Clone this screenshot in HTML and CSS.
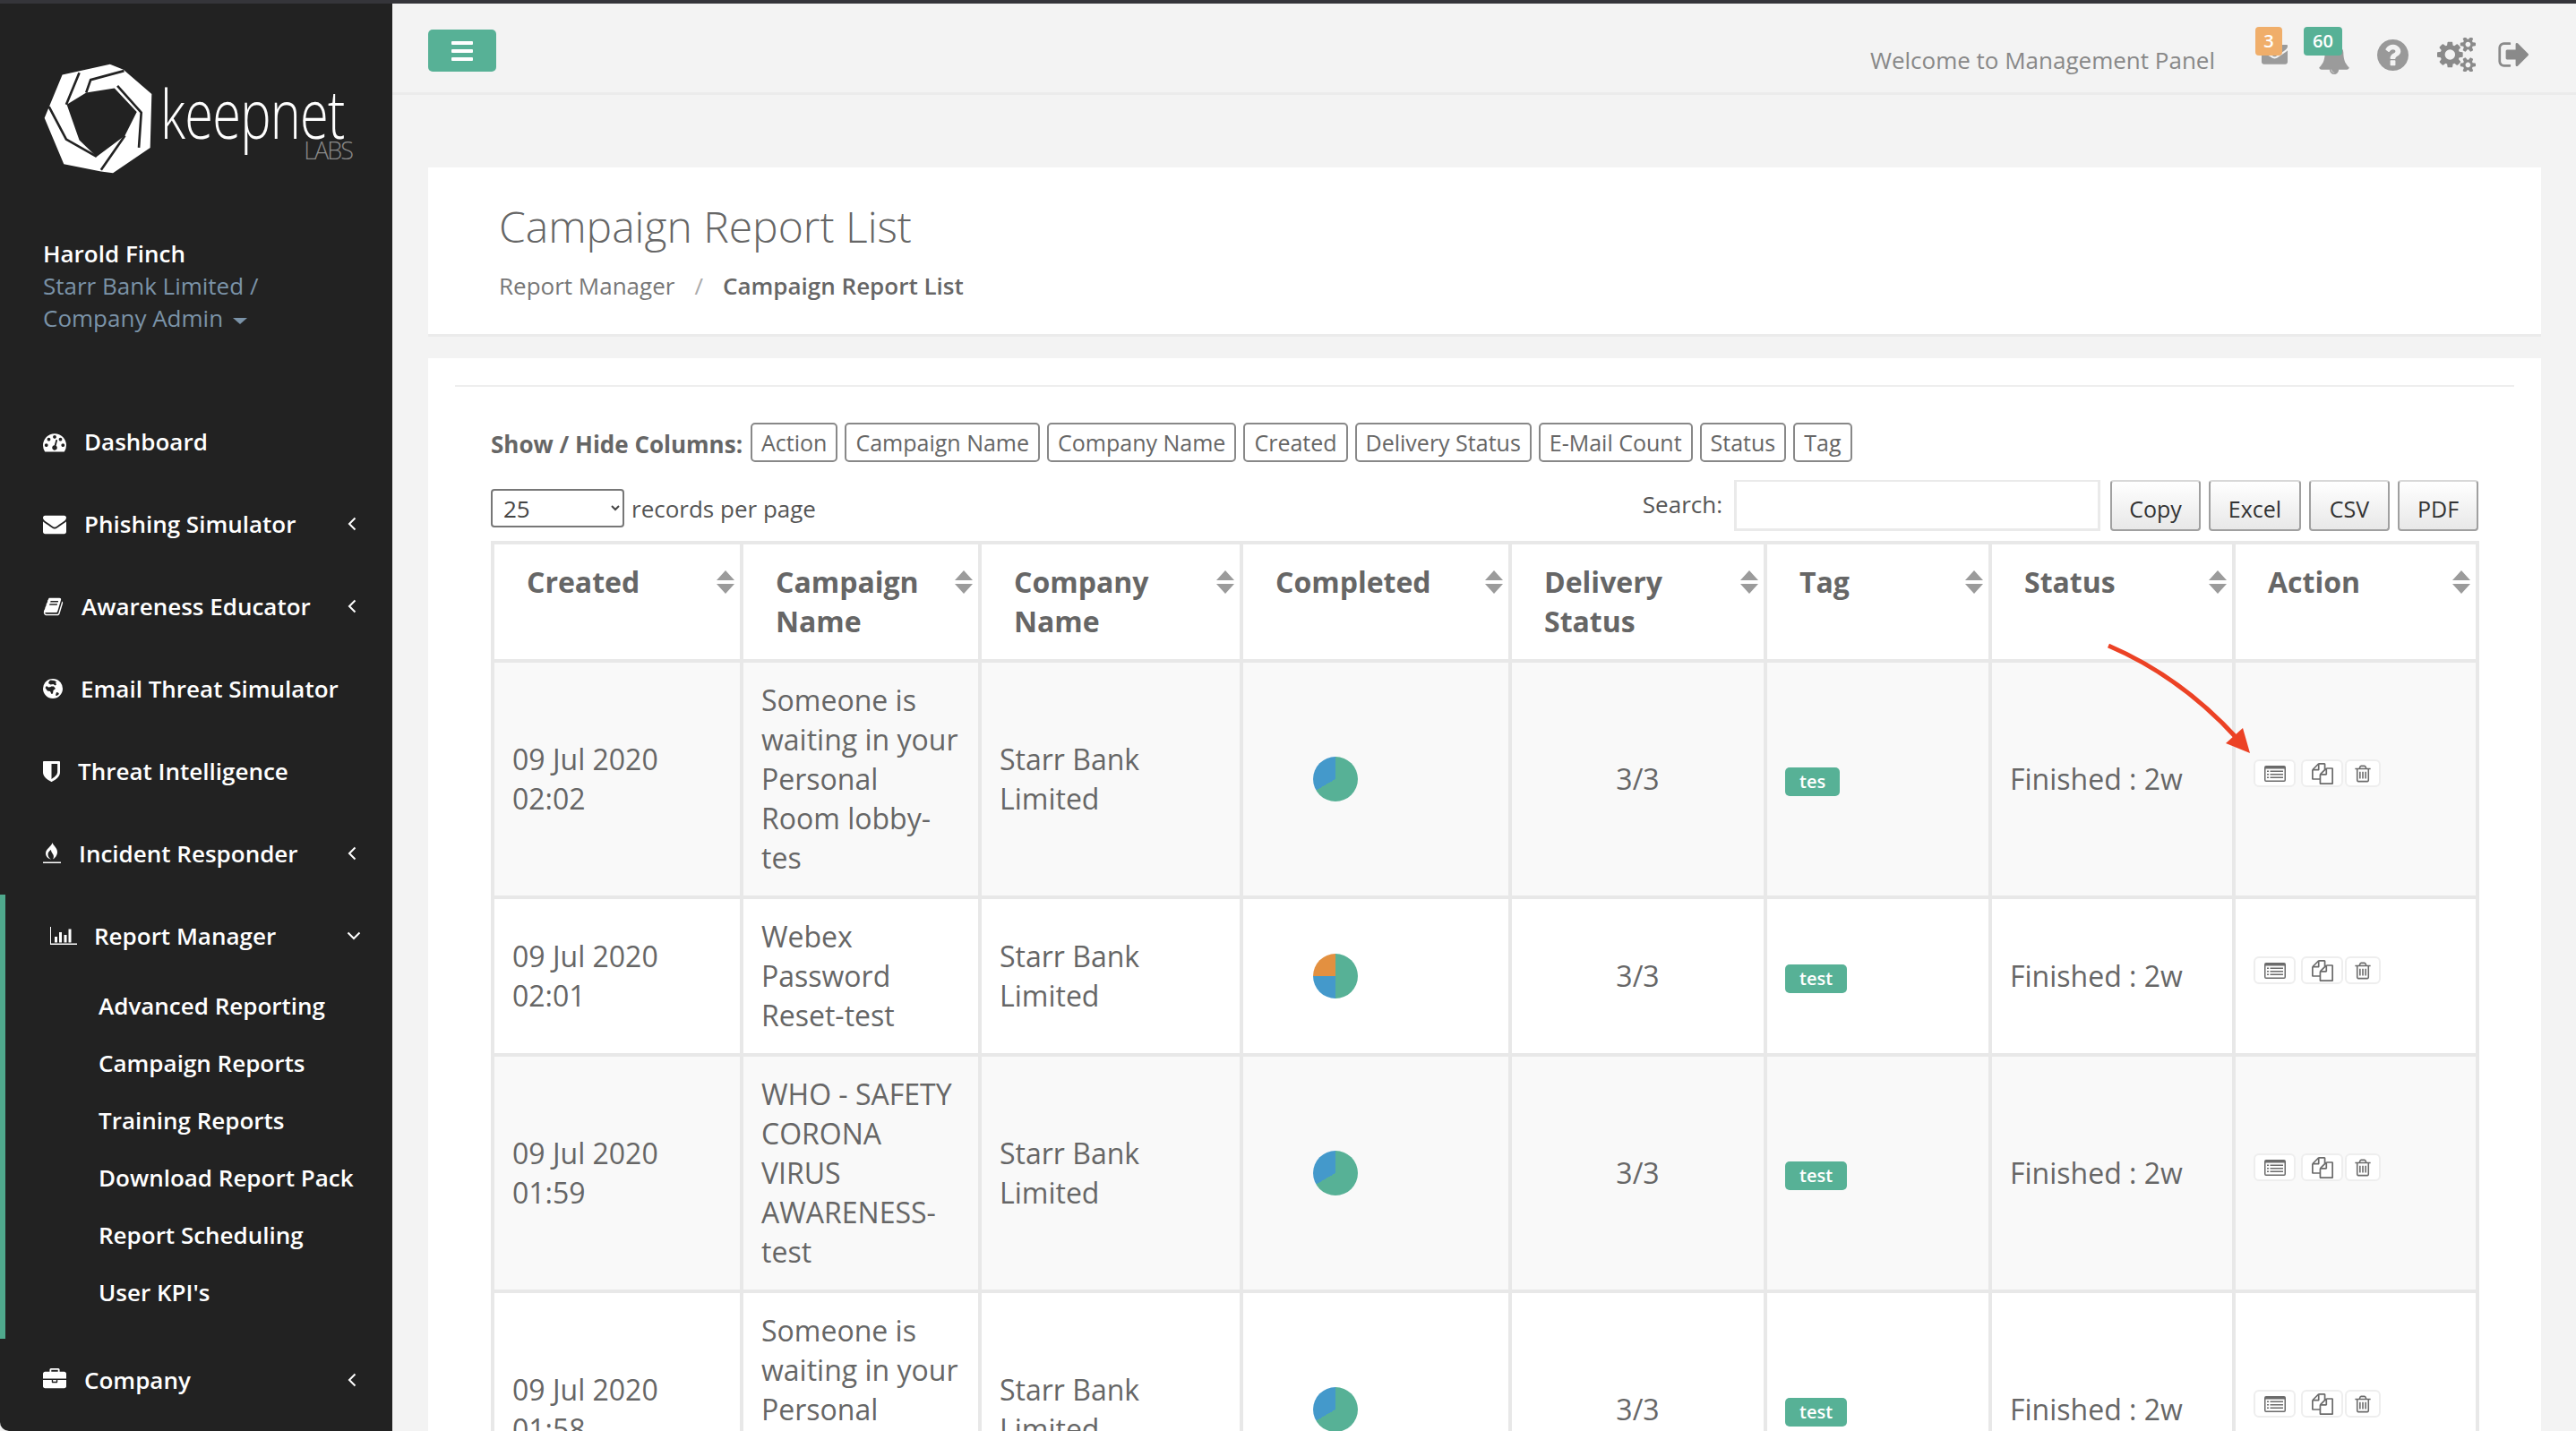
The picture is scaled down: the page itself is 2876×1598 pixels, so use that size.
FILE: index.html
```html
<!DOCTYPE html>
<html lang="en">
<head>
<meta charset="utf-8">
<title>Campaign Report List</title>
<link rel="stylesheet" href="styles.css">
</head>
<body>
<svg class="defs" xmlns="http://www.w3.org/2000/svg">
  <symbol id="i-env" viewBox="0 0 1792 1792"><path d="M1792 710v794q0 66-47 113t-113 47h-1472q-66 0-113-47t-47-113v-794q44 49 101 87 362 246 497 345 57 42 92.5 65.5t94.5 48 110 24.5h2q51 0 110-24.5t94.5-48 92.5-65.5q170-123 498-345 57-39 100-87zm0-294q0 79-49 151t-122 123q-376 261-468 325-10 7-42.5 30.5t-54 38-52 32.5-57.5 27-50 9h-2q-23 0-50-9t-57.5-27-52-32.5-54-38-42.5-30.5q-91-64-262-182.5t-205-142.5q-62-42-117-115.5t-55-136.5q0-78 41.5-130t118.5-52h1472q65 0 112.5 47t47.5 113z"/></symbol>
  <symbol id="i-list" viewBox="0 0 48 36"><path fill-rule="evenodd" d="M4 0h40a4 4 0 0 1 4 4v28a4 4 0 0 1-4 4H4a4 4 0 0 1-4-4V4a4 4 0 0 1 4-4zM3 7v25q0 1 1 1h40q1 0 1-1V7z"/><path d="M6 11h4v3H6zM13 11h29v3H13zM6 18h4v3H6zM13 18h29v3H13zM6 25h4v3H6zM13 25h29v3H13z"/></symbol>
  <symbol id="i-files" viewBox="0 0 1792 1792"><path d="M1696 384q40 0 68 28t28 68v1216q0 40-28 68t-68 28h-960q-40 0-68-28t-28-68v-288h-544q-40 0-68-28t-28-68v-672q0-40 20-88t48-76l408-408q28-28 76-48t88-20h416q40 0 68 28t28 68v328q68-40 128-40h416zm-544 213l-299 299h299v-299zm-640-384l-299 299h299v-299zm196 647l316-316v-416h-384v416q0 40-28 68t-68 28h-416v640h512v-256q0-40 20-88t48-76zm956 804v-1152h-384v416q0 40-28 68t-68 28h-416v640h896z"/></symbol>
  <symbol id="i-trash" viewBox="0 0 1792 1792"><path d="M704 736v576q0 14-9 23t-23 9h-64q-14 0-23-9t-9-23v-576q0-14 9-23t23-9h64q14 0 23 9t9 23zm256 0v576q0 14-9 23t-23 9h-64q-14 0-23-9t-9-23v-576q0-14 9-23t23-9h64q14 0 23 9t9 23zm256 0v576q0 14-9 23t-23 9h-64q-14 0-23-9t-9-23v-576q0-14 9-23t23-9h64q14 0 23 9t9 23zm128 724v-948h-896v948q0 22 7 40.5t14.5 27 10.5 8.5h832q3 0 10.5-8.5t14.5-27 7-40.5zm-672-1076h448l-48-117q-7-9-17-11h-317q-10 2-17 11zm928 32v64q0 14-9 23t-23 9h-96v948q0 83-47 143.5t-113 60.5h-832q-66 0-113-58.5t-47-141.5v-952h-96q-14 0-23-9t-9-23v-64q0-14 9-23t23-9h309l70-167q15-37 54-63t79-26h320q40 0 79 26t54 63l70 167h309q14 0 23 9t9 23z"/></symbol>
  <symbol id="i-sort" viewBox="0 0 20 26"><path d="M10 0l10 11H0zM0 15h20L10 26z"/></symbol>
  <symbol id="i-left" viewBox="0 0 10 16"><path d="M8.5 1.5L2 8l6.5 6.5" fill="none" stroke="currentColor" stroke-width="2"/></symbol>
  <symbol id="i-down" viewBox="0 0 16 10"><path d="M1.5 1.5L8 8l6.5-6.5" fill="none" stroke="currentColor" stroke-width="2"/></symbol>
</svg>

<div class="app">
  <aside class="sidebar">
    <div class="logo">
      <svg class="logo-mark" viewBox="140 205 370 375" width="123" height="125">
        <path fill="#fff" fill-rule="evenodd" d="M365 210L410 228 505 310 500 490 375 575 335 570 210 545 145 390 205 245zM285 305L220 345 262 465 320 520 415 450 455 370 380 290z"/>
        <path fill="none" stroke="#222" stroke-width="8" d="M262 238L218 345M412 232L300 262 285 305M390 282L470 372 462 490M160 352L218 462 320 520M415 450L335 565"/>
      </svg>
      <div class="logo-text">
        <span class="logo-name">keepnet</span>
        <span class="logo-labs">LABS</span>
      </div>
    </div>
    <div class="user">
      <div class="user-name">Harold Finch</div>
      <div class="user-role">Starr Bank Limited /</div>
      <div class="user-role">Company Admin <span class="caret"></span></div>
    </div>
    <nav class="nav">
      <a class="nav-item"><svg class="w26" viewBox="0 0 1792 1792"><path d="M384 1184q0-53-37.5-90.5t-90.5-37.5-90.5 37.5-37.5 90.5 37.5 90.5 90.5 37.5 90.5-37.5 37.5-90.5zm192-448q0-53-37.5-90.5t-90.5-37.5-90.5 37.5-37.5 90.5 37.5 90.5 90.5 37.5 90.5-37.5 37.5-90.5zm428 481l101-382q6-26-7.5-48.5t-38.5-29.5-48 6.5-30 39.5l-101 382q-60 5-107 43.5t-63 98.5q-20 77 20 146t117 89 146-20 89-117q16-60-6-117t-72-91zm660-33q0-53-37.5-90.5t-90.5-37.5-90.5 37.5-37.5 90.5 37.5 90.5 90.5 37.5 90.5-37.5 37.5-90.5zm-640-640q0-53-37.5-90.5t-90.5-37.5-90.5 37.5-37.5 90.5 37.5 90.5 90.5 37.5 90.5-37.5 37.5-90.5zm448 192q0-53-37.5-90.5t-90.5-37.5-90.5 37.5-37.5 90.5 37.5 90.5 90.5 37.5 90.5-37.5 37.5-90.5zm320 448q0 261-141 483-19 29-54 29h-1402q-35 0-54-29-141-221-141-483 0-182 71-348t191-286 286-191 348-71 348 71 286 191 191 286 71 348z"/></svg><span>Dashboard</span></a>
      <a class="nav-item"><svg class="w26"><use href="#i-env"/></svg><span>Phishing Simulator</span><svg class="nav-left"><use href="#i-left"/></svg></a>
      <a class="nav-item"><svg class="w23" viewBox="0 0 1792 1792"><path d="M1703 478q40 57 18 129l-275 906q-19 64-76.5 107.5t-122.5 43.5h-923q-77 0-148.5-53.5t-99.5-131.5q-24-67-2-127 0-4 3-27t4-37q1-8-3-21.5t-3-19.5q2-11 8-21t16.5-23.5 16.5-23.5q23-38 45-91.5t30-91.5q3-10 .5-30t-.5-28q3-11 17-28t17-23q21-36 42-92t25-90q1-9-2.5-32t.5-28q4-13 22-30.5t22-22.5q19-26 42.5-84.5t27.5-96.5q1-8-3-25.5t-2-26.5q2-8 9-18t18-23 17-21q8-12 16.5-30.5t15-35 16-36 19.5-32 26.5-23.5 36-11.5 47.5 5.5l-1 3q38-9 51-9h761q74 0 114 56t18 130l-274 906q-36 119-71.5 153.5t-128.5 34.5h-869q-27 0-38 15-11 16-1 43 24 70 144 70h923q29 0 56-15.5t35-41.5l300-987q7-22 5-57 38 15 59 43zm-1064 2q-4 13 2 22.5t20 9.5h608q13 0 25.5-9.5t16.5-22.5l21-64q4-13-2-22.5t-20-9.5h-608q-13 0-25.5 9.5t-16.5 22.5zm-83 256q-4 13 2 22.5t20 9.5h608q13 0 25.5-9.5t16.5-22.5l21-64q4-13-2-22.5t-20-9.5h-608q-13 0-25.5 9.5t-16.5 22.5z"/></svg><span>Awareness Educator</span><svg class="nav-left"><use href="#i-left"/></svg></a>
      <a class="nav-item"><svg class="w22" viewBox="0 0 44 44"><path fill-rule="evenodd" d="M22 0a22 22 0 1 1 0 44a22 22 0 0 1 0-44zM14 5l-2 5 5 3 1 5-6 1-4-3-3 4 5 7 6 1 3 6 3-1 1-7 5-4-4-5-6 0-1-4 6-1 4 3 3-2-2-5 3-1-6-3-8-1zM30 30l4 1 2 3-5 4-3-1z"/></svg><span>Email Threat Simulator</span></a>
      <a class="nav-item"><svg class="w19" viewBox="256 128 1280 1536" preserveAspectRatio="none"><path d="M1344 960v-640h-448v1137q119-63 213-137 235-184 235-360zm192-768v768q0 86-33.5 170.5t-83 150-118 127.5-126.5 103-121 77.5-89.5 49.5-42.5 20q-12 6-26 6t-26-6q-16-7-42.5-20t-89.5-49.5-121-77.5-126.5-103-118-127.5-83-150-33.5-170.5v-768q0-26 19-45t45-19h1152q26 0 45 19t19 45z"/></svg><span>Threat Intelligence</span></a>
      <a class="nav-item"><svg class="w20" viewBox="0 0 40 48"><path d="M21 0c2 7 11 11 11 21 0 8-6 14-10 16 3-5 2-9-1-13-2-3-3-5-3-8-3 2-7 5-7 10 0 6 4 9 7 11C12 36 6 31 6 24 6 13 19 9 21 0z"/><rect x="0" y="43" width="40" height="3"/></svg><span>Incident Responder</span><svg class="nav-left"><use href="#i-left"/></svg></a>
      <div class="nav-group">
        <a class="nav-item nav-open"><svg class="w30" viewBox="0 0 60 40"><path d="M0 0h2v37h58v3H0zM10 22h6v13h-6zM20 12h6v23h-6zM31 18h6v17h-6zM41 5h6v30h-6z"/></svg><span>Report Manager</span><svg class="nav-down"><use href="#i-down"/></svg></a>
        <ul class="sub">
          <li>Advanced Reporting</li>
          <li>Campaign Reports</li>
          <li>Training Reports</li>
          <li>Download Report Pack</li>
          <li>Report Scheduling</li>
          <li>User KPI's</li>
        </ul>
      </div>
      <a class="nav-item"><svg class="w26" viewBox="0 0 1792 1792"><path d="M640 256h512v-128h-512v128zm1152 640v480q0 66-47 113t-113 47h-1472q-66 0-113-47t-47-113v-480h672v160q0 26 19 45t45 19h320q26 0 45-19t19-45v-160h672zm-768 0v128h-256v-128h256zm768-480v384h-1792v-384q0-66 47-113t113-47h352v-160q0-40 28-68t68-28h576q40 0 68 28t28 68v160h352q66 0 113 47t47 113z"/></svg><span>Company</span><svg class="nav-left"><use href="#i-left"/></svg></a>
    </nav>
  </aside>

  <main class="main">
    <header class="topbar">
      <button class="menu-btn"><span></span><span></span><span></span></button>
      <div class="top-right">
        <span class="welcome">Welcome to Management Panel</span>
        <span class="top-icon ti-mail"><svg viewBox="0 256 1792 1408" preserveAspectRatio="none"><use href="#i-env"/></svg><b class="badge badge-orange">3</b></span>
        <span class="top-icon ti-bell"><svg viewBox="0 0 1792 1792"><path d="M912 1696q0-16-16-16-59 0-101.5-42.5t-42.5-101.5q0-16-16-16t-16 16q0 73 51.5 124.5t124.5 51.5q16 0 16-16zm816-288q0 52-38 90t-90 38h-448q0 106-75 181t-181 75-181-75-75-181h-448q-52 0-90-38t-38-90q50-42 91-88t85-119.5 74.5-158.5 50-206 19.5-260q0-152 117-282.5t307-158.5q-8-19-8-39 0-40 28-68t68-28 68 28 28 68q0 20-8 39 190 28 307 158.5t117 282.5q0 139 19.5 260t50 206 74.5 158.5 85 119.5 91 88z"/></svg><b class="badge badge-green">60</b></span>
        <svg class="ti-help" viewBox="128 128 1536 1536"><path d="M1024 1376v-192q0-14-9-23t-23-9h-192q-14 0-23 9t-9 23v192q0 14 9 23t23 9h192q14 0 23-9t9-23zm256-672q0-88-55.5-163t-138.5-116-170-41q-243 0-371 213-15 24 8 42l132 100q7 6 19 6 16 0 25-12 53-68 86-92 34-24 86-24 48 0 85.5 26t37.5 59q0 38-20 61t-68 45q-63 28-115.5 86.5t-52.5 125.5v36q0 14 9 23t23 9h192q14 0 23-9t9-23q0-19 21.5-49.5t54.5-49.5q32-18 49-28.5t46-35 44.5-48 28-60.5 12.5-81zm384 192q0 209-103 385.5t-279.5 279.5-385.5 103-385.5-103-279.5-279.5-103-385.5 103-385.5 279.5-279.5 385.5-103 385.5 103 279.5 279.5 103 385.5z"/></svg>
        <svg class="ti-cogs" viewBox="0 128 1920 1536"><path d="M896 896q0-106-75-181t-181-75-181 75-75 181 75 181 181 75 181-75 75-181zm768 512q0-52-38-90t-90-38-90 38-38 90q0 53 37.5 90.5t90.5 37.5 90.5-37.5 37.5-90.5zm0-1024q0-52-38-90t-90-38-90 38-38 90q0 53 37.5 90.5t90.5 37.5 90.5-37.5 37.5-90.5zm-384 421v185q0 10-7 19.5t-16 10.5l-155 24q-11 35-32 76 34 48 90 115 7 11 7 20 0 12-7 19-23 30-82.5 89.5t-78.5 59.5q-11 0-21-7l-115-90q-37 19-77 31-11 108-23 155-7 24-30 24h-186q-11 0-20-7.5t-10-17.5l-23-153q-34-10-75-31l-118 89q-7 7-20 7-11 0-21-8-144-133-144-160 0-9 7-19 10-14 41-53t47-61q-23-44-35-82l-152-24q-10-1-17-9.5t-7-19.5v-185q0-10 7-19.5t16-10.5l155-24q11-35 32-76-34-48-90-115-7-11-7-20 0-12 7-20 22-30 82-89t79-59q11 0 21 7l115 90q34-18 77-32 11-108 23-154 7-24 30-24h186q11 0 20 7.5t10 17.5l23 153q34 10 75 31l118-89q8-7 20-7 11 0 21 8 144 133 144 160 0 8-7 19-12 16-42 54t-45 60q23 48 34 82l152 23q10 2 17 10.5t7 19.5zm640 533v140q0 16-149 31-12 27-30 52 51 113 51 138 0 4-4 7-122 71-124 71-8 0-46-47t-52-68q-20 2-30 2t-30-2q-14 21-52 68t-46 47q-2 0-124-71-4-3-4-7 0-25 51-138-18-25-30-52-149-15-149-31v-140q0-16 149-31 13-29 30-52-51-113-51-138 0-4 4-7 4-2 35-20t59-34 30-16q8 0 46 46.5t52 67.5q20-2 30-2t30 2q51-71 92-112l6-2q4 0 124 70 4 3 4 7 0 25-51 138 17 23 30 52 149 15 149 31zm0-1024v140q0 16-149 31-12 27-30 52 51 113 51 138 0 4-4 7-122 71-124 71-8 0-46-47t-52-68q-20 2-30 2t-30-2q-14 21-52 68t-46 47q-2 0-124-71-4-3-4-7 0-25 51-138-18-25-30-52-149-15-149-31v-140q0-16 149-31 13-29 30-52-51-113-51-138 0-4 4-7 4-2 35-20t59-34 30-16q8 0 46 46.5t52 67.5q20-2 30-2t30 2q51-71 92-112l6-2q4 0 124 70 4 3 4 7 0 25-51 138 17 23 30 52 149 15 149 31z"/></svg>
        <svg class="ti-out" viewBox="0 256 1632 1280"><path d="M704 1440q0 4 1 20t.5 26.5-3 23.5-10 19.5-20.5 6.5h-320q-119 0-203.5-84.5t-84.5-203.5v-704q0-119 84.5-203.5t203.5-84.5h320q13 0 22.5 9.5t9.5 22.5q0 4 1 20t.5 26.5-3 23.5-10 19.5-20.5 6.5h-320q-66 0-113 47t-47 113v704q0 66 47 113t113 47h312l11.5 1 11.5 3 8 5.5 7 9 2 13.5zm928-544q0 26-19 45l-544 544q-19 19-45 19t-45-19-19-45v-288h-448q-26 0-45-19t-19-45v-384q0-26 19-45t45-19h448v-288q0-26 19-45t45-19 45 19l544 544q19 19 19 45z"/></svg>
      </div>
    </header>

    <div class="content">
      <section class="title-card">
        <h1>Campaign Report List</h1>
        <div class="crumbs"><span>Report Manager</span><span class="crumb-sep">/</span><strong>Campaign Report List</strong></div>
      </section>

      <section class="list-card">
        <hr class="rule">
        <div class="list-inner">
          <div class="columns-row">
            <strong class="columns-label">Show / Hide Columns:</strong>
            <button class="col-btn">Action</button>
            <button class="col-btn">Campaign Name</button>
            <button class="col-btn">Company Name</button>
            <button class="col-btn">Created</button>
            <button class="col-btn">Delivery Status</button>
            <button class="col-btn">E-Mail Count</button>
            <button class="col-btn">Status</button>
            <button class="col-btn">Tag</button>
          </div>
          <div class="controls">
            <label class="length">
              <select class="length-select"><option>25</option><option>50</option><option>100</option></select>
              <span>records per page</span>
            </label>
            <div class="tools">
              <label class="search"><span>Search:</span><input class="search-input" type="text"></label>
              <button class="tool-btn btn-copy">Copy</button>
              <button class="tool-btn btn-excel">Excel</button>
              <button class="tool-btn btn-csv">CSV</button>
              <button class="tool-btn btn-pdf">PDF</button>
            </div>
          </div>

          <table class="report">
            <colgroup>
              <col class="c1"><col class="c2"><col class="c3"><col class="c4"><col class="c5"><col class="c6"><col class="c7"><col class="c8">
            </colgroup>
            <thead>
              <tr>
                <th><div class="th-in"><span>Created</span><svg class="sort"><use href="#i-sort"/></svg></div></th>
                <th><div class="th-in"><span>Campaign Name</span><svg class="sort"><use href="#i-sort"/></svg></div></th>
                <th><div class="th-in"><span>Company Name</span><svg class="sort"><use href="#i-sort"/></svg></div></th>
                <th><div class="th-in"><span>Completed</span><svg class="sort"><use href="#i-sort"/></svg></div></th>
                <th><div class="th-in"><span>Delivery Status</span><svg class="sort"><use href="#i-sort"/></svg></div></th>
                <th><div class="th-in"><span>Tag</span><svg class="sort"><use href="#i-sort"/></svg></div></th>
                <th><div class="th-in"><span>Status</span><svg class="sort"><use href="#i-sort"/></svg></div></th>
                <th><div class="th-in"><span>Action</span><svg class="sort"><use href="#i-sort"/></svg></div></th>
              </tr>
            </thead>
            <tbody>
              <tr>
                <td>09 Jul 2020 02:02</td>
                <td>Someone is waiting in your Personal Room lobby-tes</td>
                <td>Starr Bank Limited</td>
                <td><div class="pie pie-two"></div></td>
                <td class="center">3/3</td>
                <td><span class="tag">tes</span></td>
                <td>Finished : 2w</td>
                <td><div class="actions"><button class="act act-list"><svg><use href="#i-list"/></svg></button><button class="act act-copy"><svg><use href="#i-files"/></svg></button><button class="act act-del"><svg><use href="#i-trash"/></svg></button></div></td>
              </tr>
              <tr>
                <td>09 Jul 2020 02:01</td>
                <td>Webex Password Reset-test</td>
                <td>Starr Bank Limited</td>
                <td><div class="pie pie-three"></div></td>
                <td class="center">3/3</td>
                <td><span class="tag">test</span></td>
                <td>Finished : 2w</td>
                <td><div class="actions"><button class="act act-list"><svg><use href="#i-list"/></svg></button><button class="act act-copy"><svg><use href="#i-files"/></svg></button><button class="act act-del"><svg><use href="#i-trash"/></svg></button></div></td>
              </tr>
              <tr>
                <td>09 Jul 2020 01:59</td>
                <td>WHO - SAFETY CORONA VIRUS AWARENESS-test</td>
                <td>Starr Bank Limited</td>
                <td><div class="pie pie-two"></div></td>
                <td class="center">3/3</td>
                <td><span class="tag">test</span></td>
                <td>Finished : 2w</td>
                <td><div class="actions"><button class="act act-list"><svg><use href="#i-list"/></svg></button><button class="act act-copy"><svg><use href="#i-files"/></svg></button><button class="act act-del"><svg><use href="#i-trash"/></svg></button></div></td>
              </tr>
              <tr>
                <td>09 Jul 2020 01:58</td>
                <td>Someone is waiting in your Personal Room lobby-test</td>
                <td>Starr Bank Limited</td>
                <td><div class="pie pie-two"></div></td>
                <td class="center">3/3</td>
                <td><span class="tag">test</span></td>
                <td>Finished : 2w</td>
                <td><div class="actions"><button class="act act-list"><svg><use href="#i-list"/></svg></button><button class="act act-copy"><svg><use href="#i-files"/></svg></button><button class="act act-del"><svg><use href="#i-trash"/></svg></button></div></td>
              </tr>
            </tbody>
          </table>
        </div>
      </section>
    </div>
  </main>
</div>

<svg class="annotation" viewBox="0 0 2876 1598" xmlns="http://www.w3.org/2000/svg">
  <path d="M2354 721C2410 745 2455 778 2497 824" fill="none" stroke="#ec4225" stroke-width="5"/>
  <path d="M2512 841L2485 830 2504 813z" fill="#ec4225"/>
</svg>
</body>
</html>
```

FILE: styles.css
```css
* { box-sizing: border-box; }
html, body { margin: 0; height: 100%; }
body {
  overflow: hidden;
  background: #f3f3f3;
  font-family: "Open Sans", "Noto Sans", sans-serif;
  color: #666;
}
.defs { width: 0; height: 0; position: absolute; }
svg { fill: currentColor; display: block; }
button { font-family: inherit; }

.app {
  display: flex;
  height: 1598px;
  border-top: 4px solid #35353a;
}

/* Sidebar */
.sidebar {
  width: 438px;
  flex: none;
  background: #222;
  color: #fff;
  border-bottom-left-radius: 10px;
}
.logo {
  display: flex;
  gap: 8px;
  padding: 66px 0 0 48px;
  height: 213px;
}
.logo-text {
  width: 214px;
  padding-top: 18px;
  display: flex;
  flex-direction: column;
}
.logo-name {
  display: block;
  font-size: 76px;
  font-weight: 300;
  line-height: 76px;
  letter-spacing: -1px;
  white-space: nowrap;
  transform: scaleX(0.76);
  transform-origin: left top;
}
.logo-labs {
  align-self: flex-end;
  margin-top: -11px;
  font-size: 27px;
  line-height: 30px;
  font-weight: 300;
  letter-spacing: -2px;
  color: #8a8a8a;
}
.user {
  padding: 48px 0 0 48px;
  height: 230px;
  font-size: 26px;
  line-height: 36px;
}
.user-name { font-weight: 600; color: #fff; }
.user-role { color: #7b93a8; }
.caret {
  display: inline-block;
  width: 0;
  height: 0;
  margin-left: 4px;
  vertical-align: 3px;
  border-style: solid;
  border-width: 7px 8px 0;
  border-color: #7b93a8 transparent transparent;
}
.nav-item {
  display: flex;
  align-items: center;
  gap: 20px;
  height: 92px;
  padding: 0 40px 0 48px;
  font-size: 26px;
  font-weight: 600;
  color: #fff;
}
.nav-item svg { flex: none; }
.w26 { width: 26px; height: 26px; }
.w23 { width: 23px; height: 23px; }
.w22 { width: 22px; height: 22px; }
.w19 { width: 19px; height: 23px; }
.w20 { width: 20px; height: 26px; }
.w30 { width: 30px; height: 22px; }
.nav-left { width: 10px; height: 16px; margin-left: auto; }
.nav-down { width: 16px; height: 10px; margin-left: auto; }
.nav-group {
  border-left: 6px solid #4fa98d;
  padding-bottom: 20px;
}
.nav-open { padding-left: 50px; padding-right: 35px; gap: 19px; }
.sub {
  list-style: none;
  margin: 0;
  padding: 0 0 0 104px;
  font-size: 26px;
  font-weight: 600;
  color: #fff;
}
.sub li {
  height: 64px;
  line-height: 64px;
  white-space: nowrap;
}

/* Main */
.main {
  flex: 1;
  min-width: 0;
}
.topbar {
  height: 102px;
  display: flex;
  justify-content: space-between;
  padding: 29px 0 0 40px;
  border-bottom: 3px solid #ebebeb;
}
.menu-btn {
  width: 76px;
  height: 47px;
  padding: 0;
  border: 0;
  border-radius: 5px;
  background: #57b196;
  display: flex;
  flex-direction: column;
  align-items: center;
  justify-content: center;
  gap: 5px;
}
.menu-btn span {
  width: 24px;
  height: 4px;
  background: #fff;
  border-radius: 1px;
}
.top-right {
  display: flex;
  align-items: flex-start;
  color: #8f8f8f;
  padding-right: 53px;
}
.welcome {
  font-size: 26px;
  line-height: 36px;
  margin-top: 16px;
  color: #888;
  white-space: nowrap;
}
.top-icon { position: relative; display: block; }
.ti-mail { width: 37px; height: 29px; margin: 17px 0 0 48px; }
.ti-mail svg { width: 37px; height: 29px; color: #9b9b9b; }
.ti-bell { width: 36px; height: 36px; margin: 14px 0 0 30px; }
.ti-bell svg { width: 36px; height: 36px; color: #9b9b9b; }
.badge {
  position: absolute;
  top: -17px;
  height: 32px;
  border-radius: 4px;
  color: #fff;
  font-size: 20px;
  line-height: 32px;
  font-weight: 600;
  text-align: center;
}
.top-icon .badge { top: -19px; }
.badge-orange { left: -3px; width: 30px; background: #f0ae6a; }
.badge-green { left: -16px; width: 43px; background: #57b196; top: -14px; }
.ti-mail .badge { top: -20px; }
.ti-bell .badge { top: -17px; }
.ti-help { width: 35px; height: 35px; margin: 11px 0 0 30px; color: #999; }
.ti-cogs { width: 43px; height: 38px; margin: 9px 0 0 32px; color: #8a8a8a; }
.ti-out { width: 35px; height: 28px; margin: 14px 0 0 24px; color: #8a8a8a; }

.content { padding: 81px 39px 0 40px; }
.title-card {
  height: 189px;
  background: #fff;
  border-bottom: 3px solid #ebebeb;
  padding: 33px 0 0 79px;
}
.title-card h1 {
  margin: 0;
  font-size: 48px;
  line-height: 66px;
  font-weight: 300;
  color: #666;
}
.crumbs {
  display: flex;
  margin-top: 15px;
  font-size: 26px;
  line-height: 36px;
  color: #777;
}
.crumb-sep { margin: 0 22px; color: #aaa; }
.crumbs strong { font-weight: 600; color: #666; }

.list-card {
  margin-top: 24px;
  background: #fff;
  padding: 30px 30px 0;
}
.rule {
  margin: 0;
  border: 0;
  height: 2px;
  background: #eee;
}
.list-inner { padding: 40px 40px 0; }
.columns-row {
  display: flex;
  align-items: center;
  gap: 8px;
  height: 44px;
}
.columns-label {
  font-size: 26px;
  font-weight: 700;
  color: #666;
  margin-right: 1px;
  padding-top: 4px;
  white-space: nowrap;
}
.col-btn {
  height: 44px;
  padding: 0 10px;
  border: 2px solid #888;
  border-radius: 5px;
  background: #fff;
  color: #666;
  font-size: 25px;
  white-space: nowrap;
}
.controls {
  display: flex;
  justify-content: space-between;
  align-items: flex-start;
  margin-top: 20px;
  height: 68px;
}
.length {
  display: flex;
  align-items: center;
  gap: 8px;
  margin-top: 10px;
  font-size: 26px;
  color: #555;
}
.length-select {
  width: 149px;
  height: 43px;
  padding-left: 8px;
  border: 2px solid #777;
  border-radius: 4px;
  background: #fff;
  color: #444;
  font-family: inherit;
  font-size: 26px;
}
.tools { display: flex; gap: 9px; }
.search {
  display: flex;
  align-items: flex-start;
  gap: 13px;
  font-size: 26px;
  line-height: 54px;
  color: #555;
  margin-right: 2px;
}
.search-input {
  width: 409px;
  height: 57px;
  border: 3px solid #eaeaea;
  border-top-width: 2px;
  background: #fff;
  outline: 0;
}
.tool-btn {
  height: 57px;
  padding: 6px 0 0;
  border: 2px solid #a0a0a0;
  border-top-color: #d8d8d8;
  border-radius: 4px;
  background: linear-gradient(#fff, #e8e8e8);
  color: #333;
  font-size: 25px;
}
.btn-copy { width: 101px; }
.btn-excel { width: 103px; }
.btn-csv { width: 90px; }
.btn-pdf { width: 90px; }

/* Table */
.report {
  width: 2220px;
  table-layout: fixed;
  border-collapse: collapse;
  background: #fff;
  font-size: 32px;
  line-height: 44px;
  color: #666;
}
.c1 { width: 278px; }
.c2 { width: 266px; }
.c3 { width: 292px; }
.c4 { width: 300px; }
.c5 { width: 285px; }
.c6 { width: 251px; }
.c7 { width: 272px; }
.c8 { width: 272px; }
.report th, .report td { border: 4px solid #e8e8e8; }
.report th {
  padding: 20px 6px 20px 36px;
  text-align: left;
  font-weight: 700;
  vertical-align: top;
}
.th-in { display: flex; justify-content: space-between; align-items: flex-start; gap: 6px; }
.sort { flex: none; width: 20px; height: 26px; margin-top: 9px; color: #9b9b9b; }
.report td {
  padding: 20px;
  vertical-align: middle;
}
.report tbody tr:nth-child(odd) td { background: #f9f9f9; }
.report td.center { text-align: center; }
.pie {
  width: 50px;
  height: 50px;
  margin-left: 58px;
  border-radius: 50%;
}
.pie-two { background: conic-gradient(#57b196 0 240deg, #4499cb 240deg 360deg); }
.pie-three { background: conic-gradient(#57b196 0 180deg, #4499cb 180deg 270deg, #e39040 270deg 360deg); }
.tag {
  display: inline-block;
  height: 32px;
  padding: 0 16px;
  border-radius: 5px;
  background: #57b196;
  color: #fff;
  font-size: 20px;
  line-height: 32px;
  font-weight: 600;
  vertical-align: middle;
}
.actions {
  display: flex;
  margin-bottom: 13px;
}
.act {
  height: 31px;
  padding: 0;
  border: 2px solid #eee;
  border-radius: 6px;
  background: #fff;
  display: flex;
  align-items: center;
  justify-content: center;
  color: #6b6b6b;
}
.act-list { width: 47px; margin-right: 6px; }
.act-copy { width: 47px; margin-right: 2px; }
.act-del { width: 40px; }
.act-list svg { width: 24px; height: 18px; }
.act-copy svg { width: 24px; height: 24px; }
.act-del svg { width: 22px; height: 22px; }

.annotation {
  position: absolute;
  left: 0;
  top: 0;
  width: 2876px;
  height: 1598px;
  pointer-events: none;
}
```
